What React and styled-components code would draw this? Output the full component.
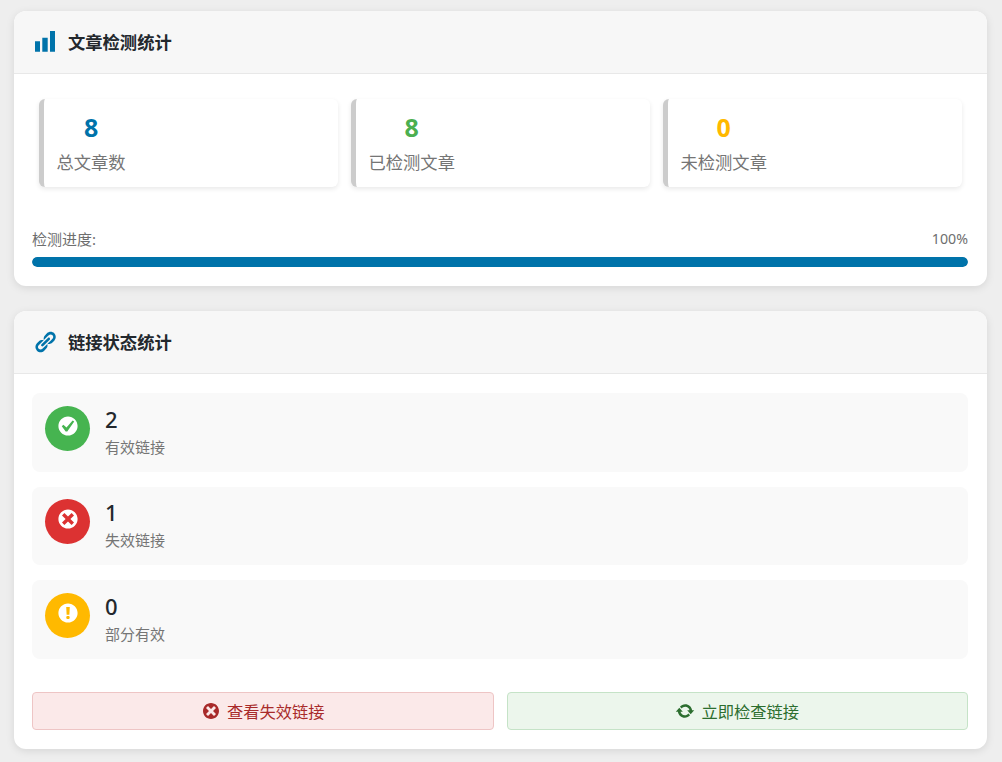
import React from "react";
import styled, { createGlobalStyle } from "styled-components";

const Global = createGlobalStyle`
  html, body { margin: 0; padding: 0; background: #eeeeee; }
  body { font-family: "Noto Sans", "Noto Sans CJK SC", sans-serif; color: #23282d; }
  * { box-sizing: border-box; }
`;

const Page = styled.div`
  display: flex;
  flex-direction: column;
  gap: 25px;
  padding: 11px 15px 13px 14px;
`;
const Card = styled.section`
  background: #fff;
  border-radius: 12px;
  box-shadow: 0 2px 8px rgba(0, 0, 0, 0.1);
  overflow: hidden;
`;
const CardHead = styled.header`
  display: flex;
  align-items: center;
  gap: 11px;
  height: 63px;
  padding: 0 19px;
  background: #f7f7f7;
  border-bottom: 1px solid #e8e8e8;
`;
const CardTitle = styled.h2`
  margin: 0;
  padding-top: 1px;
  font-size: 17.3px;
  line-height: 24px;
  font-weight: 700;
  color: #23282d;
`;
const Glyph = styled.svg`
  display: block;
  flex: none;
  width: ${(p) => p.$size}px;
  height: ${(p) => p.$size}px;
  fill: ${(p) => p.$color};
`;
const CardBody = styled.div`
  padding: ${(p) => p.$pad};
`;
const StatGrid = styled.div`
  display: grid;
  grid-template-columns: repeat(3, 1fr);
  gap: 13px;
  padding: 0 6px 0 7px;
`;
const Stat = styled.div`
  height: 88px;
  padding: 13px 12.5px 0;
  background: #fff;
  border-left: 5px solid #cccccc;
  border-radius: 6px;
  box-shadow: 0 2px 5px rgba(0, 0, 0, 0.09);
`;
const StatInner = styled.div`
  display: inline-block;
  text-align: center;
`;
const StatValue = styled.div`
  font-size: 25px;
  line-height: 30px;
  font-weight: 700;
  color: ${(p) => p.$color};
`;
const StatLabel = styled.div`
  margin-top: 7px;
  font-size: 17.3px;
  line-height: 28px;
  color: #757575;
`;
const ProgressRow = styled.div`
  display: flex;
  justify-content: space-between;
  align-items: center;
  margin-top: 42px;
  font-size: 15px;
  line-height: 20px;
  color: #6e6e6e;
`;
const ProgressValue = styled.span`
  font-size: 14.2px;
`;
const Track = styled.div`
  height: 10px;
  margin-top: 8px;
  border-radius: 5px;
  background: #e5e5e5;
  overflow: hidden;
`;
const Fill = styled.div`
  height: 100%;
  border-radius: 5px;
  background: #0073aa;
`;
const LinkList = styled.div`
  display: flex;
  flex-direction: column;
  gap: 15px;
`;
const LinkItem = styled.div`
  display: flex;
  align-items: flex-start;
  gap: 15px;
  height: 78.5px;
  padding: 12.6px 13px;
  background: #f9f9f9;
  border-radius: 8px;
`;
const Badge = styled.div`
  display: flex;
  align-items: center;
  justify-content: center;
  flex: none;
  width: 45px;
  height: 45px;
  padding-bottom: 5px;
  border-radius: 50%;
  background: ${(p) => p.$color};
`;
const LinkValue = styled.div`
  margin-top: -1px;
  font-size: 22px;
  line-height: 28px;
  font-weight: 500;
  color: #23282d;
`;
const LinkLabel = styled.div`
  margin-top: 3px;
  font-size: 15px;
  line-height: 22px;
  color: #757575;
`;
const Actions = styled.div`
  display: grid;
  grid-template-columns: 1fr 1fr;
  gap: 13px;
  margin-top: 33px;
`;
const Action = styled.button`
  display: flex;
  align-items: center;
  justify-content: center;
  gap: 6px;
  height: 38px;
  padding: 0;
  border: 1px solid ${(p) => p.$border};
  border-radius: 4px;
  background: ${(p) => p.$bg};
  color: ${(p) => p.$color};
  font-family: inherit;
  font-size: 16.3px;
`;

const P = {
  bars: "M1.67 18.1V9.4h4.16v8.7zM7.75 18.1V6.4h4.5v11.7zM14.17 18.1V.83h4.16v17.27z",
  link: "M17.74 2.76c1.68 1.69 1.68 4.41 0 6.1l-1.53 1.52c-1.12 1.12-2.7 1.47-4.14 1.09l2.62-2.61.76-.77.76-.76c.84-.84.84-2.2 0-3.04-.84-.85-2.2-.85-3.04 0l-.77.76-3.38 3.38c-.37-1.44-.02-3.02 1.1-4.14l1.52-1.53c1.69-1.68 4.42-1.68 6.1 0zM8.59 13.43l5.34-5.34c.42-.42.42-1.1 0-1.52-.44-.43-1.13-.39-1.53 0l-5.33 5.34c-.42.42-.42 1.1 0 1.52.44.43 1.13.39 1.52 0zm-.76 2.29l4.14-4.15c.38 1.44.03 3.02-1.09 4.14l-1.52 1.53c-1.69 1.68-4.41 1.68-6.1 0-1.68-1.68-1.68-4.42 0-6.1l1.53-1.52c1.12-1.12 2.7-1.47 4.14-1.1l-4.14 4.15c-.85.84-.85 2.2 0 3.05.84.84 2.2.84 3.04 0z",
  yes: "M10 2c-4.42 0-8 3.58-8 8s3.58 8 8 8 8-3.58 8-8-3.58-8-8-8zm-.615 12.66h-1.34l-3.24-4.54 1.34-1.25 2.57 2.4 5.14-5.93 1.34.94-5.81 8.38z",
  no: "M10 2c4.42 0 8 3.58 8 8s-3.58 8-8 8-8-3.58-8-8 3.58-8 8-8zm5 11l-3-3 3-3-2-2-3 3-3-3-2 2 3 3-3 3 2 2 3-3 3 3z",
  warn: "M10 2c4.42 0 8 3.58 8 8s-3.58 8-8 8-8-3.58-8-8 3.58-8 8-8zm1.13 9.38l.35-6.46H8.52l.35 6.46h2.26zm-.09 3.36c.24-.23.37-.55.37-.96 0-.42-.12-.74-.36-.97s-.59-.35-1.06-.35-.82.12-1.07.35-.37.55-.37.97c0 .41.13.73.38.96.26.23.61.34 1.06.34s.8-.11 1.05-.34z",
  update: "M10.2 3.28c3.53 0 6.43 2.61 6.92 6h2.08l-3.5 4-3.5-4h2.32c-.45-1.97-2.21-3.45-4.32-3.45-1.45 0-2.73.71-3.54 1.78L4.95 5.66C6.23 4.2 8.11 3.28 10.2 3.28zm-.4 13.44c-3.52 0-6.43-2.61-6.92-6H.8l3.5-4c1.17 1.33 2.33 2.67 3.5 4H5.48c.45 1.97 2.21 3.45 4.32 3.45 1.45 0 2.73-.71 3.54-1.78l1.71 1.95c-1.28 1.46-3.15 2.38-5.25 2.38z",
};
const Icon = ({ d, size, color }) => (
  <Glyph viewBox="0 0 20 20" $size={size} $color={color} aria-hidden="true">
    <path d={d} />
  </Glyph>
);

const stats = [
  { value: 8, label: "总文章数", color: "#0073aa" },
  { value: 8, label: "已检测文章", color: "#4caf50" },
  { value: 0, label: "未检测文章", color: "#ffb900" },
];
const links = [
  { value: 2, label: "有效链接", color: "#46b450", icon: P.yes },
  { value: 1, label: "失效链接", color: "#dc3232", icon: P.no },
  { value: 0, label: "部分有效", color: "#ffb900", icon: P.warn },
];

export default function App() {
  return (
    <>
      <Global />
      <Page>
        <Card>
          <CardHead>
            <Icon d={P.bars} size={24} color="#0073aa" />
            <CardTitle>文章检测统计</CardTitle>
          </CardHead>
          <CardBody $pad="25px 19px 19px 18px">
            <StatGrid>
              {stats.map((s) => (
                <Stat key={s.label}>
                  <StatInner>
                    <StatValue $color={s.color}>{s.value}</StatValue>
                    <StatLabel>{s.label}</StatLabel>
                  </StatInner>
                </Stat>
              ))}
            </StatGrid>
            <ProgressRow>
              <span>检测进度:</span>
              <ProgressValue>100%</ProgressValue>
            </ProgressRow>
            <Track>
              <Fill style={{ width: "100%" }} />
            </Track>
          </CardBody>
        </Card>
        <Card>
          <CardHead>
            <Icon d={P.link} size={24} color="#0073aa" />
            <CardTitle>链接状态统计</CardTitle>
          </CardHead>
          <CardBody $pad="19px 19px 19px 18px">
            <LinkList>
              {links.map((l) => (
                <LinkItem key={l.label}>
                  <Badge $color={l.color}>
                    <Icon d={l.icon} size={24} color="#fff" />
                  </Badge>
                  <div>
                    <LinkValue>{l.value}</LinkValue>
                    <LinkLabel>{l.label}</LinkLabel>
                  </div>
                </LinkItem>
              ))}
            </LinkList>
            <Actions>
              <Action $bg="#fbe9e9" $border="#eec5c5" $color="#a82a2a">
                <Icon d={P.no} size={20} color="#a82a2a" />
                查看失效链接
              </Action>
              <Action $bg="#ecf6ec" $border="#c5e3c7" $color="#2c6e2f">
                <Icon d={P.update} size={20} color="#2c6e2f" />
                立即检查链接
              </Action>
            </Actions>
          </CardBody>
        </Card>
      </Page>
    </>
  );
}
